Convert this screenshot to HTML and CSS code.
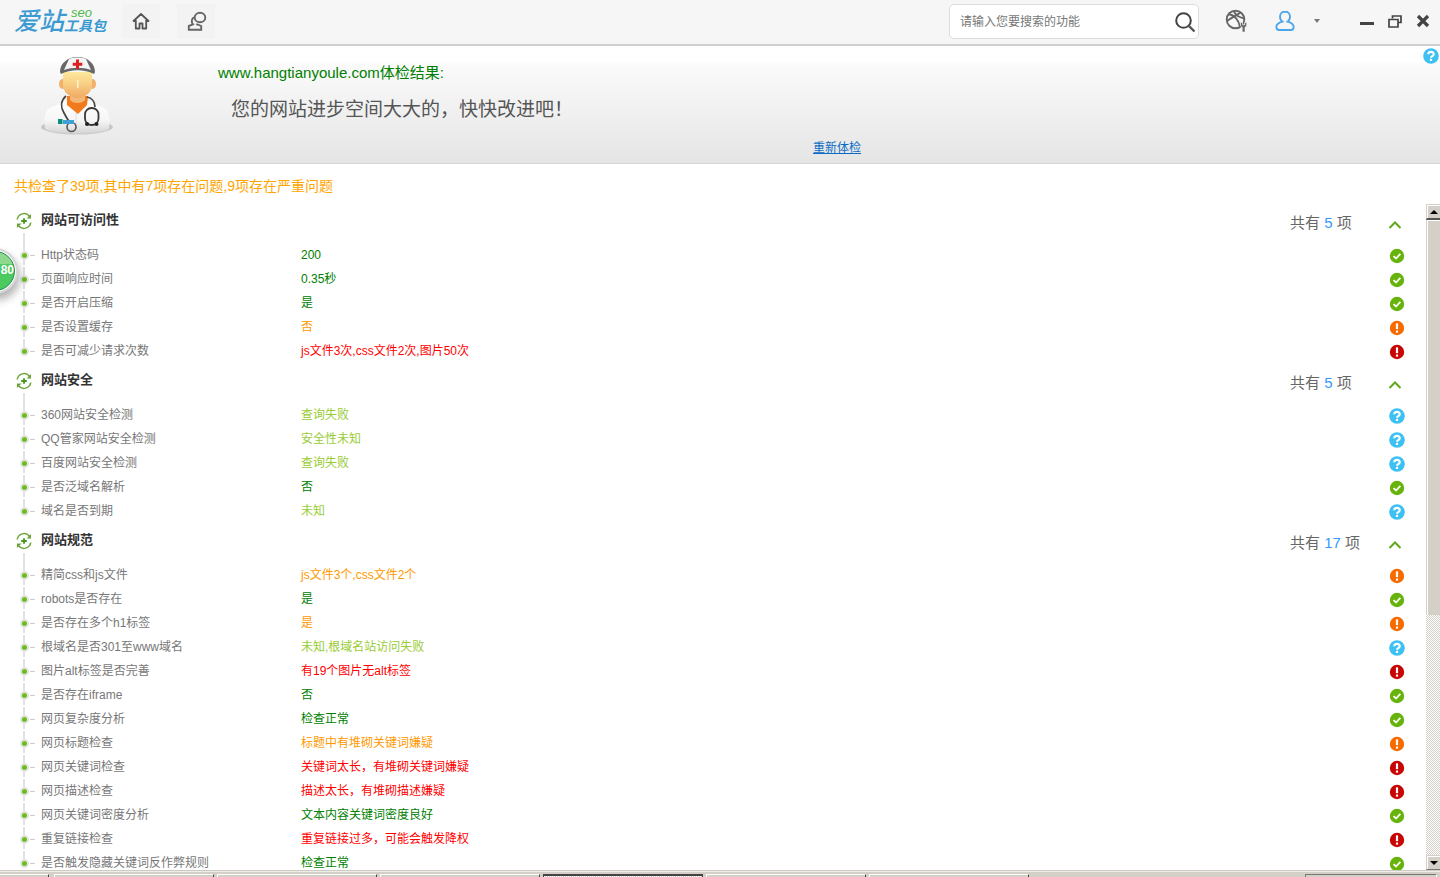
FILE: index.html
```html
<!DOCTYPE html>
<html lang="zh-CN">
<head>
<meta charset="utf-8">
<title>爱站SEO工具包</title>
<link rel="stylesheet" href="styles.css">
</head>
<body>
<svg class="defs" width="0" height="0" aria-hidden="true">
  <defs>
    <symbol id="i-ok" viewBox="0 0 16 16"><circle cx="8" cy="8" r="7.2" fill="#66b30a"/><path d="M4.600 8.200 7 10.500l4.400-4.600" fill="none" stroke="#fff" stroke-width="1.800"/></symbol>
    <symbol id="i-warn" viewBox="0 0 16 16"><circle cx="8" cy="8" r="7.2" fill="#f56b00"/><path d="M8 3.400v5.800" stroke="#fff" stroke-width="2.200"/><path d="M8 10.600v2" stroke="#fff" stroke-width="2.200"/></symbol>
    <symbol id="i-err" viewBox="0 0 16 16"><circle cx="8" cy="8" r="7.2" fill="#c80505"/><path d="M8 3.400v5.800" stroke="#fff" stroke-width="2.200"/><path d="M8 10.600v2" stroke="#fff" stroke-width="2.200"/></symbol>
    <symbol id="i-help" viewBox="0 0 16 16"><circle cx="8" cy="8" r="7.8" fill="#3dc0f2"/><path d="M5.300 6.300c0-3.300 5.400-3.300 5.400-.1 0 2-2.700 1.800-2.700 3.500" fill="none" stroke="#fff" stroke-width="2.200"/><path d="M8 10.800v2.200" stroke="#fff" stroke-width="2.200"/></symbol>
    <symbol id="i-sec" viewBox="0 0 18 18"><path d="M2.200 7.500A7 7 0 0 1 14.500 4.200" fill="none" stroke="#6aa53a" stroke-width="1.500"/><path d="M15.800 10.500A7 7 0 0 1 3.500 13.800" fill="none" stroke="#6aa53a" stroke-width="1.500"/><path d="M16 2v4.500h-4.500zM2 16v-4.500h4.500z" fill="#6aa53a"/><path d="M9 6.200v5.600M6.200 9h5.600" stroke="#3f9a1e" stroke-width="1.800"/></symbol>
    <symbol id="i-up" viewBox="0 0 14 10"><path d="M1.500 8 7 2.500 12.500 8" fill="none" stroke="#62a81c" stroke-width="2"/></symbol>
  </defs>
</svg>

<header class="topbar">
  <div class="logo">
    <span class="logo-main">爱站</span>
    <span class="logo-side"><span class="logo-seo">seo</span><span class="logo-sub">工具包</span></span>
  </div>
  <div class="tile">
    <svg width="20" height="20" viewBox="0 0 20 20"><path d="M2 10.500 10 3l8 7.500M4.800 9v8.500h3.700v-5h3v5h3.700V9" fill="none" stroke="#555" stroke-width="1.800" stroke-linejoin="round"/></svg>
  </div>
  <div class="tile tile-second">
    <svg width="22" height="20" viewBox="0 0 22 20"><ellipse cx="15" cy="6.500" rx="5.300" ry="4.800" fill="none" stroke="#666" stroke-width="1.900"/><path d="M9.500 6.500C6.500 7 6 11 8 13.300L3.800 15v3.800h12.400V15c-1.500-.8-3.500-1.300-5-2" fill="none" stroke="#666" stroke-width="1.900"/></svg>
  </div>
  <label class="search">
    <span class="search-text">请输入您要搜索的功能</span>
    <svg width="22" height="22" viewBox="0 0 22 22"><circle cx="9.500" cy="9.500" r="7.300" fill="none" stroke="#444" stroke-width="2"/><path d="m14.800 14.800 5.700 5.700" stroke="#555" stroke-width="2.400"/></svg>
  </label>
  <div class="tool tool-wide">
    <svg width="24" height="24" viewBox="0 0 24 24"><g fill="none" stroke="#666" stroke-width="1.900"><circle cx="10.500" cy="10.500" r="8.800"/><path d="M3.500 5c5 1 10 5 11.500 13M2 12C6.500 8.500 11.500 6.500 15.500 3.500M8.500 2c3 5 4.500 6 11 7.500"/></g><path d="M15.500 13.500h2v2.300h2.200v-2.300h2v3.500l-1.700 1.200V23h-2.800v-4.800l-1.700-1.200z" fill="#666" stroke="#f6f6f6" stroke-width=".6"/></svg>
  </div>
  <div class="tool tool-wide">
    <svg width="22" height="24" viewBox="0 0 22 24"><path d="M11 2.500c-3.300 0-5 2.500-5 5.200 0 2.300 1 4 2.500 5-3.500 1-6.200 2.500-6.200 5.300 0 2 1 3 3 3h11.400c2 0 3-1 3-3 0-2.800-2.700-4.300-6.200-5.300 1.500-1 2.500-2.700 2.500-5 0-2.700-1.700-5.200-5-5.200z" fill="none" stroke="#4aa5ea" stroke-width="1.800"/></svg>
  </div>
  <div class="tool tool-caret"><span class="caret"></span></div>
  <div class="tool win win-first"><span class="win-min"></span></div>
  <div class="tool win">
    <svg width="14" height="13" viewBox="0 0 14 13"><path d="M4.500 3.500V1h8.500v6.500h-3" fill="none" stroke="#444" stroke-width="1.700"/><path d="M1 4.500h9v7.500H1z" fill="none" stroke="#444" stroke-width="1.700"/></svg>
  </div>
  <div class="tool win">
    <svg width="14" height="14" viewBox="0 0 14 14"><path d="m2 2 10 10M12 2 2 12" stroke="#444" stroke-width="3.200"/></svg>
  </div>
</header>

<section class="hero">
  <svg class="doctor" width="74" height="80" viewBox="40 57 74 80">
    <defs>
      <linearGradient id="coat" x1="0" y1="0" x2="0" y2="1"><stop offset="0" stop-color="#fff"/><stop offset=".6" stop-color="#f6f6f6"/><stop offset="1" stop-color="#d4d4d4"/></linearGradient>
      <linearGradient id="face" x1="0" y1="0" x2="0" y2="1"><stop offset="0" stop-color="#fde99c"/><stop offset=".45" stop-color="#f8cf86"/><stop offset="1" stop-color="#f0a962"/></linearGradient>
    </defs>
    <ellipse cx="77" cy="127" rx="36" ry="7.500" fill="#c6c6c6"/>
    <path d="M45 129c-1-10-1-18 5-21l16-7h22l16 7c6 3 6 11 5 21-10 6-54 6-64 0z" fill="url(#coat)"/>
    <path d="M76 112v22" stroke="#dcdcdc" stroke-width="1"/>
    <path d="M67 96h21l-1 9-9 9-11-9z" fill="#f27a1a"/>
    <path d="M70 92h15v8c-3 4-12 4-15 0z" fill="#f3b877"/>
    <ellipse cx="62.500" cy="84" rx="3.500" ry="5" fill="#f2b06a"/><ellipse cx="92.500" cy="84" rx="3.500" ry="5" fill="#f2b06a"/>
    <path d="M63 72h29v13c0 8-8 13-14.500 13S63 93 63 85z" fill="url(#face)"/>
    <path d="M77 80h1.500v8H77z" fill="#fff3cc"/>
    <path d="M60 72c0-9 8-15 17.500-15S95 63 95 72l-1 2c-10-5-23-5-33 0z" fill="#686868"/>
    <path d="M69 59c5-2 12-2 17 0l5 11c-8-3-19-3-27 0z" fill="#f5f5f5"/>
    <path d="M76 59.500h3v3.300h3.300v3H79v3.300h-3v-3.300h-3.300v-3H76z" fill="#dd2020"/>
    <path d="M66 96c-6 5-5 12-2 17 2 4 4 7 6 10" fill="none" stroke="#444" stroke-width="1.700"/>
    <circle cx="71.500" cy="127" r="4.500" fill="none" stroke="#555" stroke-width="1.600"/>
    <path d="M87 97c5 1 8 5 8 10" fill="none" stroke="#444" stroke-width="1.700"/>
    <rect x="85" y="108" width="13.500" height="17" rx="6.500" fill="none" stroke="#3a3a3a" stroke-width="1.800"/>
    <circle cx="87" cy="124" r="2" fill="#222"/><circle cx="96.500" cy="124" r="2" fill="#222"/>
    <rect x="58" y="119" width="4.500" height="5" fill="#0a8f7a"/><rect x="63" y="120" width="11" height="4" fill="#3fa0d8"/>
  </svg>
  <div class="hero-text">
    <h1 class="hero-title">www.hangtianyoule.com体检结果:</h1>
    <p class="hero-msg">您的网站进步空间大大的，快快改进吧！</p>
    <a class="hero-link" href="#">重新体检</a>
  </div>
  <svg class="hero-help" width="16" height="16"><use href="#i-help"/></svg>
</section>

<p class="summary">共检查了39项,其中有7项存在问题,9项存在严重问题</p>

<div class="main">
  <div class="score"><span>80</span></div>
  <div class="list">

    <section class="sec">
      <div class="sec-head">
        <svg class="sec-icon" width="18" height="18"><use href="#i-sec"/></svg>
        <h2 class="sec-title">网站可访问性</h2>
        <span class="count">共有 <b>5</b> 项</span>
        <svg class="chev" width="14" height="10"><use href="#i-up"/></svg>
      </div>
      <ul class="rows">
        <li class="row"><span class="node"><i class="dot"></i><i class="tick"></i></span><span class="label">Http状态码</span><span class="v-good">200</span><svg class="st" width="16" height="16"><use href="#i-ok"/></svg></li>
        <li class="row"><span class="node"><i class="dot"></i><i class="tick"></i></span><span class="label">页面响应时间</span><span class="v-good">0.35秒</span><svg class="st" width="16" height="16"><use href="#i-ok"/></svg></li>
        <li class="row"><span class="node"><i class="dot"></i><i class="tick"></i></span><span class="label">是否开启压缩</span><span class="v-good">是</span><svg class="st" width="16" height="16"><use href="#i-ok"/></svg></li>
        <li class="row"><span class="node"><i class="dot"></i><i class="tick"></i></span><span class="label">是否设置缓存</span><span class="v-warn">否</span><svg class="st" width="16" height="16"><use href="#i-warn"/></svg></li>
        <li class="row"><span class="node"><i class="dot"></i><i class="tick"></i></span><span class="label">是否可减少请求次数</span><span class="v-bad">js文件3次,css文件2次,图片50次</span><svg class="st" width="16" height="16"><use href="#i-err"/></svg></li>
      </ul>
    </section>

    <section class="sec">
      <div class="sec-head">
        <svg class="sec-icon" width="18" height="18"><use href="#i-sec"/></svg>
        <h2 class="sec-title">网站安全</h2>
        <span class="count">共有 <b>5</b> 项</span>
        <svg class="chev" width="14" height="10"><use href="#i-up"/></svg>
      </div>
      <ul class="rows">
        <li class="row"><span class="node"><i class="dot"></i><i class="tick"></i></span><span class="label">360网站安全检测</span><span class="v-unk">查询失败</span><svg class="st" width="16" height="16"><use href="#i-help"/></svg></li>
        <li class="row"><span class="node"><i class="dot"></i><i class="tick"></i></span><span class="label">QQ管家网站安全检测</span><span class="v-unk">安全性未知</span><svg class="st" width="16" height="16"><use href="#i-help"/></svg></li>
        <li class="row"><span class="node"><i class="dot"></i><i class="tick"></i></span><span class="label">百度网站安全检测</span><span class="v-unk">查询失败</span><svg class="st" width="16" height="16"><use href="#i-help"/></svg></li>
        <li class="row"><span class="node"><i class="dot"></i><i class="tick"></i></span><span class="label">是否泛域名解析</span><span class="v-good">否</span><svg class="st" width="16" height="16"><use href="#i-ok"/></svg></li>
        <li class="row"><span class="node"><i class="dot"></i><i class="tick"></i></span><span class="label">域名是否到期</span><span class="v-unk">未知</span><svg class="st" width="16" height="16"><use href="#i-help"/></svg></li>
      </ul>
    </section>

    <section class="sec">
      <div class="sec-head">
        <svg class="sec-icon" width="18" height="18"><use href="#i-sec"/></svg>
        <h2 class="sec-title">网站规范</h2>
        <span class="count">共有 <b>17</b> 项</span>
        <svg class="chev" width="14" height="10"><use href="#i-up"/></svg>
      </div>
      <ul class="rows">
        <li class="row"><span class="node"><i class="dot"></i><i class="tick"></i></span><span class="label">精简css和js文件</span><span class="v-warn">js文件3个,css文件2个</span><svg class="st" width="16" height="16"><use href="#i-warn"/></svg></li>
        <li class="row"><span class="node"><i class="dot"></i><i class="tick"></i></span><span class="label">robots是否存在</span><span class="v-good">是</span><svg class="st" width="16" height="16"><use href="#i-ok"/></svg></li>
        <li class="row"><span class="node"><i class="dot"></i><i class="tick"></i></span><span class="label">是否存在多个h1标签</span><span class="v-warn">是</span><svg class="st" width="16" height="16"><use href="#i-warn"/></svg></li>
        <li class="row"><span class="node"><i class="dot"></i><i class="tick"></i></span><span class="label">根域名是否301至www域名</span><span class="v-unk">未知,根域名站访问失败</span><svg class="st" width="16" height="16"><use href="#i-help"/></svg></li>
        <li class="row"><span class="node"><i class="dot"></i><i class="tick"></i></span><span class="label">图片alt标签是否完善</span><span class="v-bad">有19个图片无alt标签</span><svg class="st" width="16" height="16"><use href="#i-err"/></svg></li>
        <li class="row"><span class="node"><i class="dot"></i><i class="tick"></i></span><span class="label">是否存在iframe</span><span class="v-good">否</span><svg class="st" width="16" height="16"><use href="#i-ok"/></svg></li>
        <li class="row"><span class="node"><i class="dot"></i><i class="tick"></i></span><span class="label">网页复杂度分析</span><span class="v-good">检查正常</span><svg class="st" width="16" height="16"><use href="#i-ok"/></svg></li>
        <li class="row"><span class="node"><i class="dot"></i><i class="tick"></i></span><span class="label">网页标题检查</span><span class="v-warn">标题中有堆砌关键词嫌疑</span><svg class="st" width="16" height="16"><use href="#i-warn"/></svg></li>
        <li class="row"><span class="node"><i class="dot"></i><i class="tick"></i></span><span class="label">网页关键词检查</span><span class="v-bad">关键词太长，有堆砌关键词嫌疑</span><svg class="st" width="16" height="16"><use href="#i-err"/></svg></li>
        <li class="row"><span class="node"><i class="dot"></i><i class="tick"></i></span><span class="label">网页描述检查</span><span class="v-bad">描述太长，有堆砌描述嫌疑</span><svg class="st" width="16" height="16"><use href="#i-err"/></svg></li>
        <li class="row"><span class="node"><i class="dot"></i><i class="tick"></i></span><span class="label">网页关键词密度分析</span><span class="v-good">文本内容关键词密度良好</span><svg class="st" width="16" height="16"><use href="#i-ok"/></svg></li>
        <li class="row"><span class="node"><i class="dot"></i><i class="tick"></i></span><span class="label">重复链接检查</span><span class="v-bad">重复链接过多，可能会触发降权</span><svg class="st" width="16" height="16"><use href="#i-err"/></svg></li>
        <li class="row"><span class="node"><i class="dot"></i><i class="tick"></i></span><span class="label">是否触发隐藏关键词反作弊规则</span><span class="v-good">检查正常</span><svg class="st" width="16" height="16"><use href="#i-ok"/></svg></li>
      </ul>
    </section>

  </div>
  <div class="scrollbar">
    <div class="sb-btn"><span class="sb-up"></span></div>
    <div class="sb-thumb"></div>
    <div class="sb-track"></div>
    <div class="sb-btn sb-btn-last"><span class="sb-down"></span></div>
  </div>
</div>

<footer class="tabs">
  <span class="tab tab-first"></span>
  <span class="tab"></span>
  <span class="tab"></span>
  <span class="tab"></span>
  <span class="tab tab-active"></span>
  <span class="tab"></span>
  <span class="tab"></span>
  <span class="tab-status"></span>
</footer>
</body>
</html>
```

FILE: styles.css
```css
* { box-sizing: border-box; }
html, body { margin: 0; padding: 0; }
body {
  width: 1440px;
  height: 877px;
  overflow: hidden;
  display: flex;
  flex-direction: column;
  background: #fff;
  color: #666;
  font: 12px/18px "Liberation Sans", "Noto Sans CJK SC", sans-serif;
}
.defs { position: absolute; }

/* top bar */
.topbar {
  flex: 0 0 46px;
  display: flex;
  align-items: center;
  background: #f6f6f6;
  border-bottom: 2px solid #cfcfcf;
  padding-bottom: 2px;
}
.logo { display: flex; width: 108px; margin-left: 14px; color: #3b9ad2; font-style: italic; }
.logo-main { font-size: 25px; font-weight: 500; line-height: 32px; width: 51px; white-space: nowrap; }
.logo-side { display: flex; flex-direction: column; width: 44px; }
.logo-seo { color: #4cb84c; font-size: 13px; line-height: 11px; margin-left: 6px; margin-top: 2px; }
.logo-sub { font-size: 14px; font-weight: 700; line-height: 17px; white-space: nowrap; margin-left: -1px; }
.tile {
  width: 38px; height: 35px;
  background: #f3f3f3;
  display: flex; align-items: center; justify-content: center;
}
.tile-second { margin-left: 17px; }
.search {
  width: 250px; height: 35px;
  margin: 1px 1px 0 auto;
  background: #fff;
  border: 1px solid #ddd;
  border-radius: 5px;
  display: flex; align-items: center; justify-content: space-between;
  padding: 0 2px 0 10px;
  color: #777;
}
.search-text { margin-top: 1px; }
.tool { display: flex; align-items: center; justify-content: center; height: 35px; }
.tool-wide { width: 48px; }
.search + .tool { margin-left: 13px; }
.tool-caret { width: 16px; }
.caret { width: 0; height: 0; border: 3px solid transparent; border-top: 4px solid #777; border-bottom: 0; }
.win { width: 28px; }
.win-first { margin-left: 28px; }
.win:last-child { margin-right: 3px; }
.win-min { width: 14px; height: 3px; background: #444; margin-top: 5px; }

/* hero */
.hero {
  position: relative;
  flex: 0 0 118px;
  display: flex;
  align-items: flex-start;
  padding-top: 18px;
  background: linear-gradient(#fff 0, #fff 14px, #fafafa 20px, #e5e5e5 100%);
  border-bottom: 1px solid #d6d6d6;
}
.doctor { flex: none; margin: -7px 0 0 40px; }
.hero-text { margin-left: 104px; display: flex; flex-direction: column; align-items: flex-start; }
.hero-title { margin: 0; font-size: 15px; font-weight: 400; line-height: 18px; color: #008000; white-space: nowrap; }
.hero-msg { margin: 15px 0 0 13px; font-size: 19px; line-height: 26px; color: #555; white-space: nowrap; }
.hero-link { margin: 17px 0 0 595px; font-size: 12px; line-height: 16px; color: #0a6cc4; text-decoration: underline; }
.hero-help { position: absolute; right: 1px; top: 2px; }

.summary {
  flex: none;
  margin: 0;
  padding: 13px 0 8px 14px;
  font-size: 14px;
  line-height: 18px;
  color: #ffa500;
}

/* main list */
.main { position: relative; flex: 1; min-height: 0; display: flex; overflow: hidden; }
.list { flex: 1; min-width: 0; overflow: hidden; }
.sec-head {
  height: 40px;
  display: flex;
  align-items: flex-start;
  padding: 8px 24px 0 15px;
  background: repeating-linear-gradient(#e2e2e2 0 10px, #fff 10px 12px) 23px 30px / 2px 10px no-repeat;
}
.sec-icon { flex: none; margin-top: 1px; }
.sec-title { margin: 0 0 0 8px; font-size: 13px; font-weight: 700; line-height: 18px; color: #333; }
.count { margin: 3px 0 0 auto; width: 98px; font-size: 15px; line-height: 18px; color: #666; }
.count b { font-weight: 400; color: #3399ff; }
.chev { flex: none; margin-top: 9px; }
.rows { list-style: none; margin: 0; padding: 0; }
.row {
  height: 24px;
  display: grid;
  grid-template-columns: 41px 260px 1fr 16px;
  align-items: center;
  padding-right: 21px;
}
.node {
  height: 24px;
  display: flex;
  align-items: center;
  padding-left: 20px;
  background: repeating-linear-gradient(#e2e2e2 0 10px, #fff 10px 12px) 23px 0 / 2px 100% no-repeat;
}
.row:last-child .node { background-size: 2px 50%; }
.dot {
  flex: none;
  width: 9px; height: 9px;
  border-radius: 50%;
  background: #6cbf1c;
  border: 2px solid #e4e4e4;
  margin-top: 1px;
}
.tick { flex: none; width: 5px; height: 1px; background: #ccc; margin: 1px 0 0 1px; }
.label { color: #777; white-space: nowrap; }
.row > span:nth-child(3) { white-space: nowrap; }
.st { margin-top: 2px; }
.v-good { color: #008000; }
.v-warn { color: #ff9900; }
.v-bad { color: #ff0000; }
.v-unk { color: #99cc33; }

/* score badge */
.score {
  position: absolute;
  left: -28px; top: 45px;
  width: 46px; height: 46px;
  border-radius: 50%;
  border: 2px solid #d6d6d6;
  background: #fff;
  padding: 1px;
  box-shadow: 2px 6px 8px rgba(0,0,0,.3);
}
.score span {
  display: block;
  width: 100%; height: 100%;
  border-radius: 50%;
  border: 1px solid #1c8a50;
  background: linear-gradient(#8fd98f 0, #8fd98f 32%, #4cc95f 33%);
  color: #fff;
  font-size: 12px;
  font-weight: 700;
  line-height: 37px;
  text-align: right;
  padding-right: 0;
}

/* classic scrollbar */
.scrollbar { flex: 0 0 14px; display: flex; flex-direction: column; margin-top: 1px; }
.sb-btn {
  flex: 0 0 16px;
  background: #d4d0c8;
  border-top: 1px solid #d4d0c8;
  border-left: 1px solid #d4d0c8;
  border-bottom: 2px solid #555;
  box-shadow: inset 1px 1px 0 #fff;
  display: flex; align-items: center; justify-content: center;
}
.sb-btn-last { border-bottom: 1px solid #777; flex-basis: 15px; }
.sb-up { width: 0; height: 0; border: 4px solid transparent; border-bottom: 4px solid #000; border-top: 0; }
.sb-down { width: 0; height: 0; border: 4px solid transparent; border-top: 4px solid #000; border-bottom: 0; }
.sb-thumb {
  flex: 0 0 395px;
  background: #d4d0c8;
  border-left: 1px solid #d4d0c8;
  box-shadow: inset 1px 1px 0 #fff;
}
.sb-track { flex: 1; background: repeating-conic-gradient(#d4d0c8 0 25%, #fff 0 50%) 0 0 / 2px 2px; }

/* bottom tab strip */
.tabs {
  flex: 0 0 7px;
  display: flex;
  gap: 3px;
  padding-top: 3px;
  background: #d4d0c8;
  border-top: 1px solid #cfcbc2;
  box-shadow: inset 0 1px 0 #efede8;
}
.tab { width: 160px; border-top: 1px solid #fff; border-left: 1px solid #fff; border-right: 1px solid #444; }
.tab-first { width: 49px; margin-right: 2px; border-left: 0; }
.tab-active { border-top: 2px solid #444; border-left: 1px solid #444; background: repeating-conic-gradient(#d4d0c8 0 25%, #fff 0 50%) 0 0 / 2px 2px; }
.tab-status { width: 132px; margin: 0 3px 0 auto; border-top: 1px solid #777; border-left: 1px solid #777; border-right: 1px solid #fff; }
```
